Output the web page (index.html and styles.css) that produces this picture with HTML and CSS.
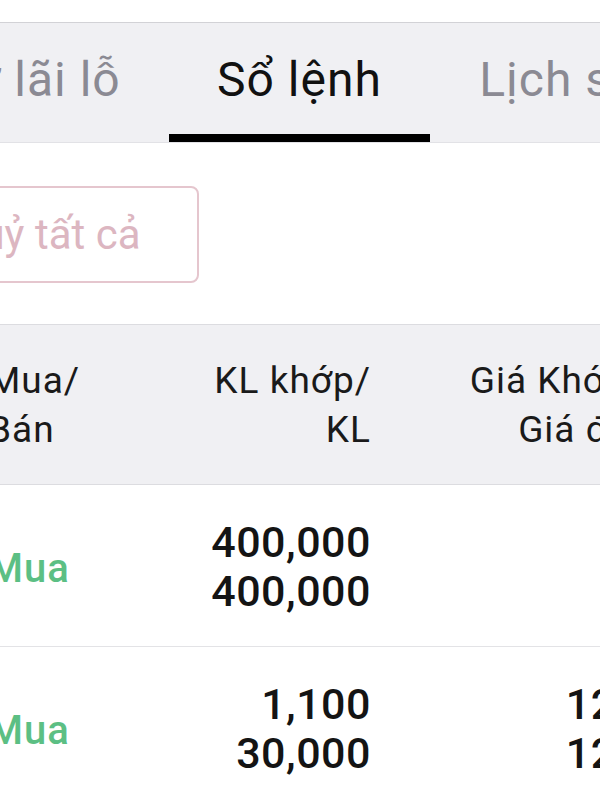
FILE: index.html
```html
<!DOCTYPE html>
<html lang="vi">
<head>
<meta charset="utf-8">
<title>Sổ lệnh</title>
<link rel="stylesheet" href="styles.css">
</head>
<body>
<div class="screen">
  <nav class="tabbar">
    <div class="tab first"><span>Dự lãi lỗ</span></div>
    <div class="tab active"><span>Sổ lệnh</span></div>
    <div class="tab"><span>Lịch sử</span></div>
  </nav>

  <div class="actions">
    <button class="cancel-all">Huỷ tất cả</button>
  </div>

  <div class="table">
    <div class="row head">
      <div class="cell c1">Mua/<br>Bán</div>
      <div class="cell c2">KL khớp/<br>KL</div>
      <div class="cell c3">Giá Khớp/<br>Giá đặt</div>
    </div>
    <div class="row">
      <div class="cell c1 buy">Mua</div>
      <div class="cell c2 num">400,000<br>400,000</div>
      <div class="cell c3 num"></div>
    </div>
    <div class="row">
      <div class="cell c1 buy">Mua</div>
      <div class="cell c2 num">1,100<br>30,000</div>
      <div class="cell c3 num">12.5<br>12.5</div>
    </div>
  </div>
</div>
</body>
</html>
```
FILE: styles.css
```css
* { box-sizing: border-box; }
html, body {
  margin: 0;
  padding: 0;
  background: #ffffff;
}
body {
  width: 600px;
  height: 800px;
  overflow: hidden;
  font-family: Roboto, "Noto Sans", "Liberation Sans", sans-serif;
}
.screen {
  margin-left: -110px;
  width: 780px;
}

/* Tabs */
.tabbar {
  margin-top: 22px;
  display: flex;
  background: #f0f0f3;
  border-top: 1px solid #d2d2d6;
  border-bottom: 1px solid #e2e2e6;
}
.tab {
  flex: none;
  width: 261px;
  height: 119px;
  padding-top: 30px;
  text-align: center;
  font-size: 48px;
  letter-spacing: 1px;
  line-height: 54px;
  color: #8b8a93;
  white-space: nowrap;
  border-bottom: 8px solid transparent;
}
.tab.first {
  width: 279px;
}
.tab.active {
  color: #111111;
  border-bottom-color: #000000;
}

/* Cancel all */
.actions {
  padding: 43px 0 41px 3px;
}
.cancel-all {
  display: flex;
  align-items: center;
  justify-content: center;
  width: 306px;
  height: 97px;
  padding: 0;
  background: #ffffff;
  border: 2.5px solid #e5c6ce;
  border-radius: 8px;
  font-family: Roboto, "Noto Sans", "Liberation Sans", sans-serif;
  font-size: 42px;
  color: #dcb6c1;
}

/* Table */
.table {
  border-top: 1px solid #dcdce0;
}
.row {
  display: grid;
  grid-template-columns: 98px 190px 194px 275px;
  height: 162px;
  border-bottom: 1px solid #e3e3e6;
  align-items: center;
}
.row::before { content: ""; }
.row.head {
  height: 160px;
  background: #f0f0f3;
  border-bottom: 1px solid #dcdce0;
  font-size: 37px;
  letter-spacing: 1px;
  line-height: 49px;
  color: #1a1a1a;
}
.cell {
  white-space: nowrap;
}
.c1 { text-align: left; }
.c2 { text-align: right; padding-right: 1px; }
.c3 { text-align: right; padding-right: 4px; }
.buy {
  font-size: 40px;
  letter-spacing: 1px;
  font-weight: 500;
  color: #5cbf84;
  padding-top: 5px;
}
.num {
  font-size: 43px;
  letter-spacing: 0.5px;
  line-height: 49px;
  font-weight: 500;
  color: #141414;
  padding-top: 2px;
}
.c3.num {
  padding-right: 0;
  margin-right: -6px;
}
```
